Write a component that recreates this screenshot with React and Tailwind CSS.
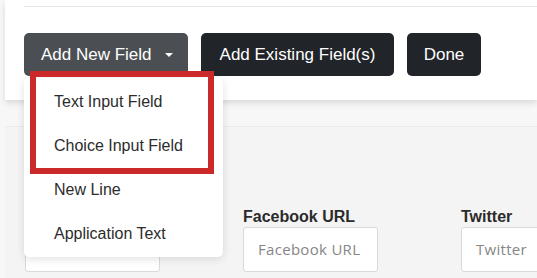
import React from "react";

function Input({ placeholder }) {
  return (
    <div className="h-[45px] w-[135px] rounded-[3px] border border-[#d9d9d9] bg-white flex items-center pl-[14px] font-['Open_Sans',sans-serif] text-[15px] tracking-[0.3px] text-[#868686]">
      {placeholder}
    </div>
  );
}

export default function App() {
  return (
    <div className="relative w-[537px] h-[278px] overflow-hidden bg-[#f7f7f7] font-['Liberation_Sans',Arial,sans-serif]">
      {/* top card */}
      <div className="ml-[5px] h-[100px] bg-white pt-[6px] pl-[19px] shadow-[0_3px_6px_rgba(0,0,0,0.12)]">
        <div className="border-t border-[#e3e3e3]" />
        <div className="mt-[26px] flex gap-[13px]">
          <button className="h-[43px] w-[164px] rounded-[5px] bg-[#4b4f53] pl-[17px] flex items-center text-[17px] text-white">
            Add New Field
            <span className="ml-[13px] mt-[1px] w-0 h-0 border-l-[4px] border-r-[4px] border-t-[4px] border-l-transparent border-r-transparent border-t-white" />
          </button>
          <button className="h-[43px] w-[193px] rounded-[5px] bg-[#212428] flex items-center justify-center text-[17px] text-white">
            Add Existing Field(s)
          </button>
          <button className="h-[43px] w-[74px] rounded-[5px] bg-[#212428] flex items-center justify-center text-[17px] text-white">
            Done
          </button>
        </div>
      </div>

      {/* lower panel */}
      <div className="ml-[5px] mt-[26px] h-[160px] border-t border-[#ebebeb] bg-[#f4f4f4] pl-[20px] pt-[81px]">
        <div className="grid grid-cols-[218px_218px_218px]">
          <div className="flex flex-col gap-[1px]">
            <div className="h-[18px] text-[16px] font-bold text-[#2b2b2b] leading-[18px]"></div>
            <Input placeholder="" />
          </div>
          <div className="flex flex-col gap-[1px]">
            <div className="h-[18px] text-[16px] font-bold text-[#2b2b2b] leading-[18px]">Facebook URL</div>
            <Input placeholder="Facebook URL" />
          </div>
          <div className="flex flex-col gap-[1px]">
            <div className="h-[18px] text-[16px] font-bold text-[#2b2b2b] leading-[18px]">Twitter</div>
            <Input placeholder="Twitter" />
          </div>
        </div>
      </div>

      {/* dropdown menu */}
      <div className="absolute left-[24px] top-[78px] w-[199px] h-[179px] rounded-[5px] bg-white pt-[2px] shadow-[0_2px_8px_rgba(0,0,0,0.12)]">
        {["Text Input Field", "Choice Input Field", "New Line", "Application Text"].map((t) => (
          <div key={t} className="h-[44px] flex items-center pl-[30px] text-[16px] text-[#2c2c2c]">
            {t}
          </div>
        ))}
      </div>

      {/* red annotation */}
      <div className="absolute left-[30px] top-[71px] w-[184px] h-[103px] border-[6px] border-[#cc2a2a]" />
    </div>
  );
}
